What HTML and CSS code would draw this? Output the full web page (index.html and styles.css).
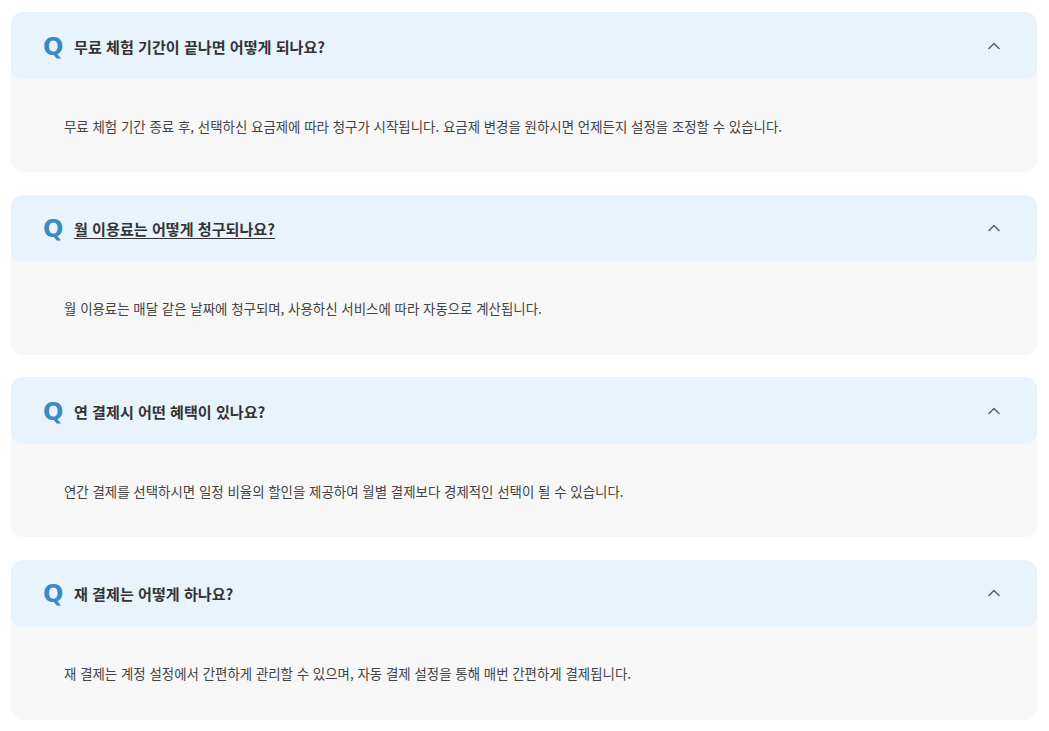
FILE: index.html
```html
<!DOCTYPE html>
<html lang="ko">
<head>
<meta charset="utf-8">
<title>FAQ</title>
<link rel="stylesheet" href="styles.css">
</head>
<body>
<div class="faq">
  <div class="item">
    <div class="head">
      <span class="q">Q</span>
      <span class="title">무료 체험 기간이 끝나면 어떻게 되나요?</span>
      <svg class="chev" width="14" height="14" viewBox="0 0 14 14"><path d="M2 9.5 L7 4.5 L12 9.5" fill="none" stroke="#5f6670" stroke-width="1.6" stroke-linecap="round" stroke-linejoin="round"/></svg>
    </div>
    <div class="body">무료 체험 기간 종료 후, 선택하신 요금제에 따라 청구가 시작됩니다. 요금제 변경을 원하시면 언제든지 설정을 조정할 수 있습니다.</div>
  </div>
  <div class="item">
    <div class="head">
      <span class="q">Q</span>
      <span class="title underline">월 이용료는 어떻게 청구되나요?</span>
      <svg class="chev" width="14" height="14" viewBox="0 0 14 14"><path d="M2 9.5 L7 4.5 L12 9.5" fill="none" stroke="#5f6670" stroke-width="1.6" stroke-linecap="round" stroke-linejoin="round"/></svg>
    </div>
    <div class="body">월 이용료는 매달 같은 날짜에 청구되며, 사용하신 서비스에 따라 자동으로 계산됩니다.</div>
  </div>
  <div class="item">
    <div class="head">
      <span class="q">Q</span>
      <span class="title">연 결제시 어떤 혜택이 있나요?</span>
      <svg class="chev" width="14" height="14" viewBox="0 0 14 14"><path d="M2 9.5 L7 4.5 L12 9.5" fill="none" stroke="#5f6670" stroke-width="1.6" stroke-linecap="round" stroke-linejoin="round"/></svg>
    </div>
    <div class="body">연간 결제를 선택하시면 일정 비율의 할인을 제공하여 월별 결제보다 경제적인 선택이 될 수 있습니다.</div>
  </div>
  <div class="item">
    <div class="head">
      <span class="q">Q</span>
      <span class="title">재 결제는 어떻게 하나요?</span>
      <svg class="chev" width="14" height="14" viewBox="0 0 14 14"><path d="M2 9.5 L7 4.5 L12 9.5" fill="none" stroke="#5f6670" stroke-width="1.6" stroke-linecap="round" stroke-linejoin="round"/></svg>
    </div>
    <div class="body">재 결제는 계정 설정에서 간편하게 관리할 수 있으며, 자동 결제 설정을 통해 매번 간편하게 결제됩니다.</div>
  </div>
</div>
</body>
</html>
```
FILE: styles.css
```css
html, body {
  margin: 0;
  padding: 0;
  background: #ffffff;
}
body {
  font-family: "Noto Sans CJK KR", "Noto Sans", sans-serif;
}
.faq {
  display: flex;
  flex-direction: column;
  gap: 22.67px;
  padding: 12px 12px 0 11px;
}
.item {
  border-radius: 12px;
  overflow: hidden;
  background: #f7f7f7;
}
.head {
  height: 67px;
  background: #e8f3fd;
  border-radius: 12px;
  display: flex;
  align-items: center;
  padding: 0 36px 0 32px;
}
.q {
  font-family: "DejaVu Sans", sans-serif;
  font-weight: 700;
  font-size: 24px;
  color: #3b8ac4;
  width: 31px;
  line-height: 1;
  margin-top: 2px;
}
.title {
  flex: 1;
  font-weight: 700;
  font-size: 15.1px;
  color: #333333;
}
.underline {
  text-decoration: underline;
  text-underline-offset: 3px;
}
.chev {
  display: block;
}
.body {
  height: 93px;
  box-sizing: border-box;
  display: flex;
  align-items: center;
  padding: 0 0 0 53px;
  font-size: 13.45px;
  color: #444444;
}
```
